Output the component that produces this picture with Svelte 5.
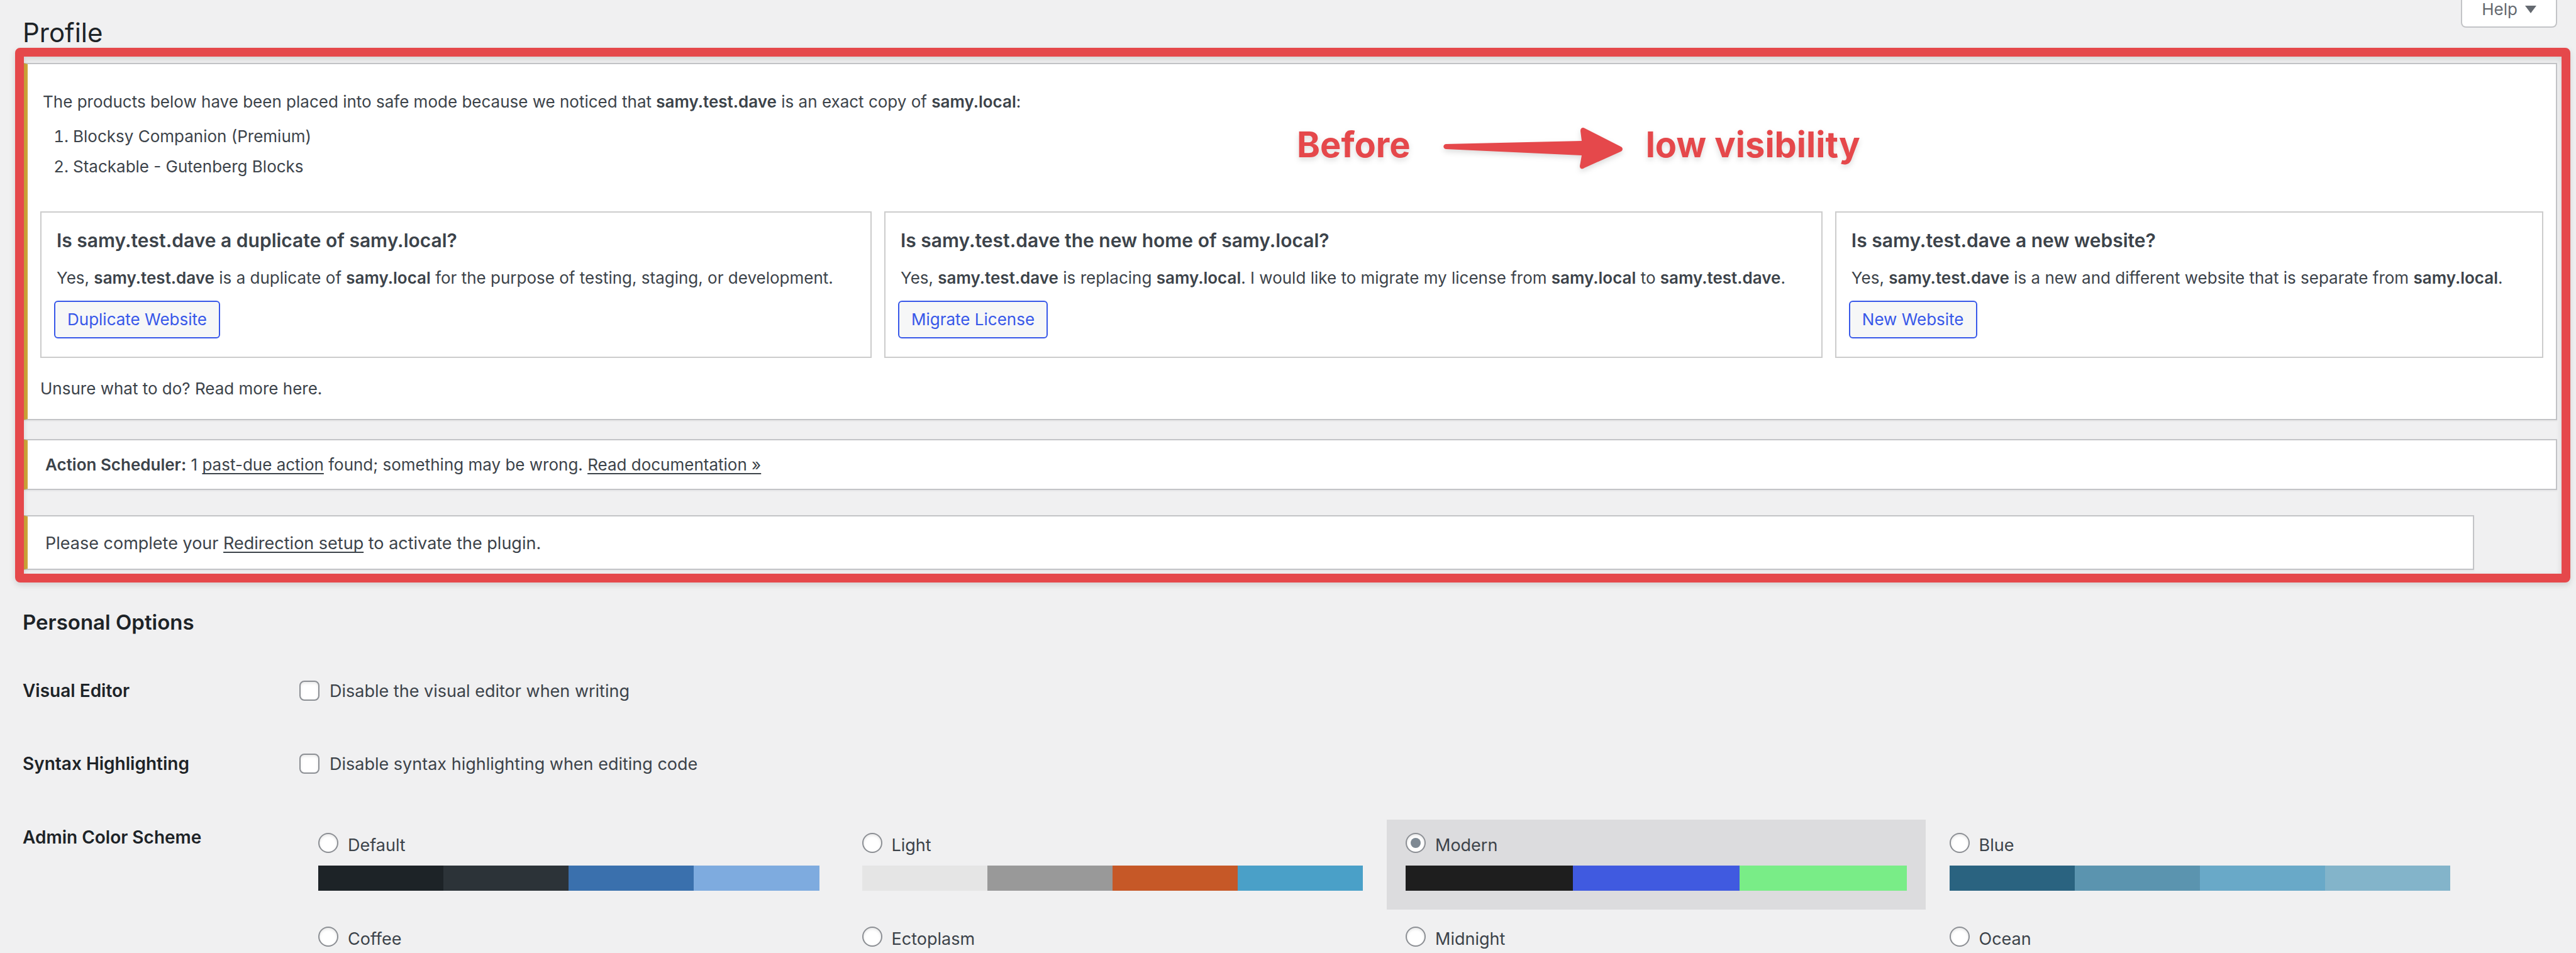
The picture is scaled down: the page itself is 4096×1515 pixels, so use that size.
<script>
  let helpOpen = $state(false);
  let visualEditorOff = $state(false);
  let syntaxOff = $state(false);
  let scheme = $state('modern');

  const schemes = [
    { id: 'default', name: 'Default', colors: ['#1d2327', '#2c3338', '#3a70ad', '#7eabdf'] },
    { id: 'light', name: 'Light', colors: ['#e5e5e5', '#999999', '#c65827', '#4aa0c8'] },
    { id: 'modern', name: 'Modern', colors: ['#1e1e1e', '#405ae0', '#79ed87'] },
    { id: 'blue', name: 'Blue', colors: ['#2a6380', '#5b94af', '#69a9c8', '#83b4ca'] },
    { id: 'coffee', name: 'Coffee', colors: [] },
    { id: 'ectoplasm', name: 'Ectoplasm', colors: [] },
    { id: 'midnight', name: 'Midnight', colors: [] },
    { id: 'ocean', name: 'Ocean', colors: [] }
  ];
</script>

<div class="page">
  <header class="top">
    <h1>Profile</h1>
    <button class="help" type="button" aria-expanded={helpOpen} onclick={() => (helpOpen = !helpOpen)}>
      Help
      <svg width="18" height="12" viewBox="0 0 18 12" aria-hidden="true">
        <path d="M0 0H18L9 12Z" fill="currentColor" />
      </svg>
    </button>
  </header>

  <section class="notices" aria-label="Notices">
    <article class="notice safe-mode">
      <p class="lead">
        The products below have been placed into safe mode because we noticed that <b>samy.test.dave</b> is an exact copy of <b>samy.local</b>:
      </p>
      <ol>
        <li>Blocksy Companion (Premium)</li>
        <li>Stackable - Gutenberg Blocks</li>
      </ol>
      <div class="cards">
        <div class="card">
          <h2>Is samy.test.dave a duplicate of samy.local?</h2>
          <p>Yes, <b>samy.test.dave</b> is a duplicate of <b>samy.local</b> for the purpose of testing, staging, or development.</p>
          <button class="action" type="button">Duplicate Website</button>
        </div>
        <div class="card">
          <h2>Is samy.test.dave the new home of samy.local?</h2>
          <p>Yes, <b>samy.test.dave</b> is replacing <b>samy.local</b>. I would like to migrate my license from <b>samy.local</b> to <b>samy.test.dave</b>.</p>
          <button class="action" type="button">Migrate License</button>
        </div>
        <div class="card">
          <h2>Is samy.test.dave a new website?</h2>
          <p>Yes, <b>samy.test.dave</b> is a new and different website that is separate from <b>samy.local</b>.</p>
          <button class="action" type="button">New Website</button>
        </div>
      </div>
      <p>Unsure what to do? <a class="plain" href="#read-more">Read more here.</a></p>
    </article>

    <article class="notice scheduler">
      <p><b>Action Scheduler:</b> 1 <a href="#past-due">past-due action</a> found; something may be wrong. <a href="#docs">Read documentation »</a></p>
    </article>

    <article class="notice redirection">
      <p>Please complete your <a href="#setup">Redirection setup</a> to activate the plugin.</p>
    </article>

    <div class="frame"></div>
    <div class="remark">
      <span>Before</span>
      <svg width="286" height="76" viewBox="0 0 286 76" aria-hidden="true">
        <path
          d="M4 33L220 28L218 12C218 7 222 6 225 8L282 37C286 39 286 43 282 45L224 71C220 74 217 72 217 68L220 51L4 41C-1 40 -1 34 4 33Z"
          fill="#e5484b"
        />
      </svg>
      <span>low visibility</span>
    </div>
  </section>

  <h2 class="section-title">Personal Options</h2>

  <form class="options">
    <div class="row">
      <span class="name">Visual Editor</span>
      <label class="check">
        <input type="checkbox" bind:checked={visualEditorOff} />
        Disable the visual editor when writing
      </label>
    </div>
    <div class="row">
      <span class="name">Syntax Highlighting</span>
      <label class="check">
        <input type="checkbox" bind:checked={syntaxOff} />
        Disable syntax highlighting when editing code
      </label>
    </div>
    <div class="row scheme-row">
      <span class="name" id="scheme-name">Admin Color Scheme</span>
      <div class="schemes" role="radiogroup" aria-labelledby="scheme-name">
        {#each schemes as s (s.id)}
          <label class="scheme" class:selected={scheme === s.id}>
            <span class="scheme-head">
              <input type="radio" name="scheme" value={s.id} bind:group={scheme} />
              {s.name}
            </span>
            {#if s.colors.length}
              <span class="palette">
                {#each s.colors as color}
                  <span style="background:{color}"></span>
                {/each}
              </span>
            {/if}
          </label>
        {/each}
      </div>
    </div>
  </form>
</div>

<style>
  :global(body) {
    margin: 0;
    background: #f0f0f1;
  }

  .page {
    font-family: Inter, 'Liberation Sans', sans-serif;
    font-size: 26px;
    line-height: 38px;
    color: #3c434a;
  }

  h1,
  h2,
  p,
  ol {
    margin: 0;
    font-weight: 400;
  }

  b {
    font-weight: 600;
  }

  a {
    color: inherit;
    text-decoration-thickness: 2px;
    text-underline-offset: 4px;
    text-decoration-skip-ink: none;
  }

  .plain {
    text-decoration: none;
  }

  .top {
    display: flex;
    justify-content: space-between;
    align-items: flex-start;
    height: 100px;
    padding: 0 30px 0 36px;
  }

  h1 {
    padding-top: 24px;
    font-size: 42px;
    line-height: 56px;
    color: #1d2327;
  }

  .help {
    display: flex;
    align-items: center;
    gap: 12px;
    padding: 2px 31px 14px;
    border: 2px solid #c3c4c7;
    border-top: 0;
    border-radius: 0 0 8px 8px;
    background: #fff;
    color: #646970;
    font: 400 26px/26px Inter, 'Liberation Sans', sans-serif;
  }

  .notices {
    position: relative;
    margin: 0 30px 0 36px;
  }

  .notice {
    border: 2px solid #c3c4c7;
    border-left: 8px solid #d1a63a;
    background: #fff;
    box-shadow: 0 2px 2px rgba(0, 0, 0, 0.04);
  }

  .safe-mode {
    padding: 40px 20px 29px;
  }

  .lead {
    padding: 0 4px;
    line-height: 40px;
  }

  ol {
    display: grid;
    gap: 10px;
    margin: 16px 0 52px;
    padding-left: 52px;
  }

  .cards {
    display: grid;
    grid-template-columns: 1323fr 1493fr 1127fr;
    gap: 20px;
    margin-bottom: 30px;
  }

  .card {
    padding: 23px 20px 29px;
    border: 2px solid #cccccc;
  }

  .card h2 {
    padding: 0 4px;
    font-size: 30px;
    font-weight: 600;
    line-height: 42px;
  }

  .card p {
    margin: 20px 0 17px;
    padding: 0 4px;
  }

  .action {
    display: block;
    height: 60px;
    padding: 0 19px;
    border: 2px solid #3858e9;
    border-radius: 6px;
    background: #f6f7f7;
    color: #3858e9;
    font: 400 26px/56px Inter, 'Liberation Sans', sans-serif;
  }

  .scheduler {
    margin-top: 30px;
    padding: 19px 28px;
    line-height: 39px;
  }

  .redirection {
    margin: 40px 132px 0 0;
    padding: 23px 28px 20px;
    font-size: 27px;
    line-height: 40px;
  }

  .frame {
    position: absolute;
    inset: -24px -21px -20px -12px;
    border: 14px solid #e5484b;
    border-radius: 8px;
    filter: drop-shadow(0 4px 5px rgba(0, 0, 0, 0.12));
    pointer-events: none;
  }

  .remark {
    position: absolute;
    top: 96px;
    left: calc(50% + 11px);
    display: flex;
    align-items: flex-start;
    color: #e5484b;
    font-size: 56px;
    font-weight: 700;
    line-height: 68px;
    white-space: nowrap;
    filter: drop-shadow(0 4px 4px rgba(0, 0, 0, 0.14));
    pointer-events: none;
  }

  .remark svg {
    margin: 0 36px 0 52px;
  }

  .section-title {
    margin: 61px 36px 69px;
    font-size: 33px;
    font-weight: 600;
    line-height: 44px;
    color: #1d2327;
  }

  .options {
    display: grid;
    gap: 80px;
    padding: 0 170px 0 36px;
    font-size: 27px;
    line-height: 36px;
  }

  .row {
    display: grid;
    grid-template-columns: 440px 1fr;
  }

  .scheme-row {
    margin-top: -9px;
  }

  .name {
    font-size: 28px;
    font-weight: 600;
    color: #1d2327;
  }

  .scheme-row .name {
    padding-top: 10px;
  }

  .check {
    display: flex;
    align-items: flex-start;
    justify-self: start;
    gap: 16px;
    height: 36px;
    line-height: 38px;
  }

  input {
    appearance: none;
    flex: none;
    display: grid;
    place-items: center;
    width: 32px;
    height: 32px;
    margin: 0;
    border: 2px solid #8c8f94;
    border-radius: 8px;
    background: #fff;
    box-shadow: inset 0 2px 4px rgba(0, 0, 0, 0.1);
  }

  input[type='checkbox'] {
    margin-top: 2px;
  }

  input[type='checkbox']:checked::before {
    content: '';
    width: 8px;
    height: 16px;
    border: solid #3858e9;
    border-width: 0 4px 4px 0;
    rotate: 45deg;
  }

  input[type='radio'] {
    border-radius: 50%;
  }

  input[type='radio']:checked::before {
    content: '';
    width: 16px;
    height: 16px;
    border-radius: 50%;
    background: #7e8993;
  }

  .schemes {
    display: grid;
    grid-template-columns: repeat(4, 1fr);
    gap: 6px 8px;
  }

  .scheme {
    display: block;
    padding: 21px 30px 0;
  }

  .selected {
    background: #dcdcde;
  }

  .scheme-head {
    display: flex;
    gap: 15px;
    height: 38px;
    line-height: 40px;
  }

  .palette {
    display: flex;
    height: 40px;
    padding: 14px 0 30px;
  }

  .palette span {
    flex: 1;
  }
</style>
